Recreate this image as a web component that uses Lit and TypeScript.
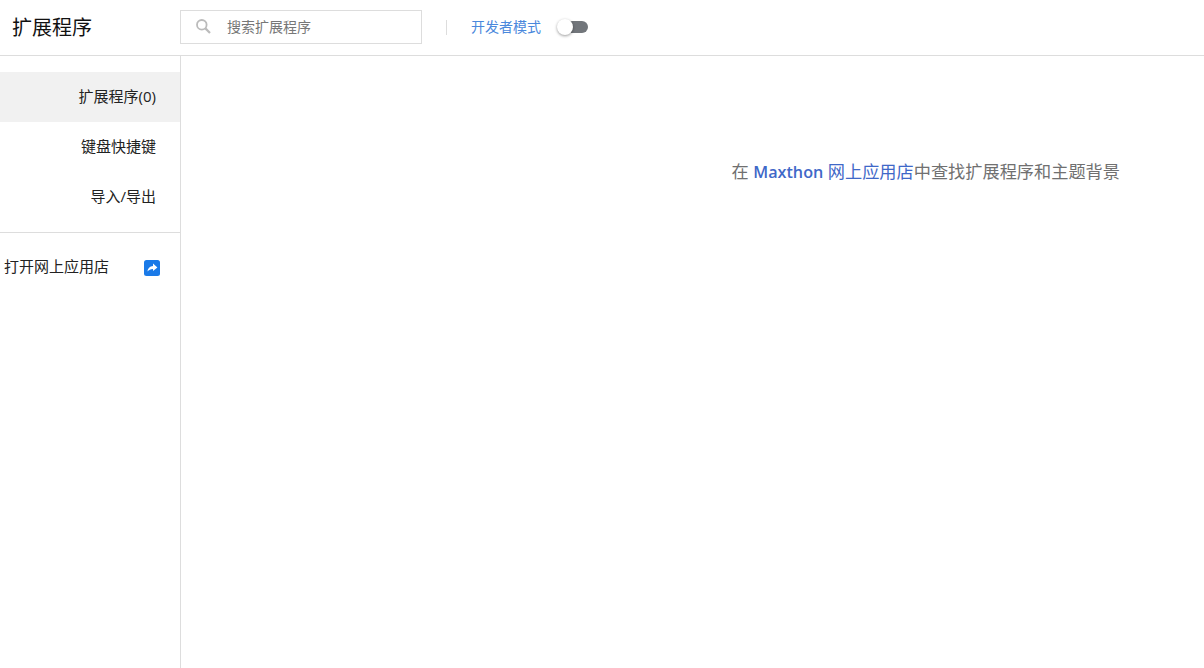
import { LitElement, html, css } from "lit";
import { customElement } from "lit/decorators.js";

@customElement("app-root")
export class AppRoot extends LitElement {
  static styles = css`
    :host {
      display: flex;
      flex-direction: column;
      width: 1204px;
      height: 668px;
      overflow: hidden;
      background: #fff;
      font-family: "Open Sans", "Noto Sans CJK SC", sans-serif;
      color: #222;
    }
    .top {
      height: 55px;
      flex: none;
      display: flex;
      align-items: center;
      border-bottom: 1px solid #ddd;
    }
    .title {
      width: 180px;
      padding-left: 12px;
      box-sizing: border-box;
      font-size: 20px;
      color: #111;
      line-height: 55px;
    }
    .search {
      width: 242px;
      height: 34px;
      box-sizing: border-box;
      border: 1px solid #ddd;
      display: flex;
      align-items: center;
      padding-left: 14px;
      gap: 15px;
      font-size: 14px;
      color: #777;
      margin-bottom: 1px;
    }
    .search span {
      margin-bottom: 2px;
    }
    .search svg {
      margin-bottom: 1px;
    }
    .sep {
      width: 1px;
      height: 15px;
      background: #ddd;
      margin-left: 24px;
    }
    .dev {
      margin: 0 0 3px 24px;
      font-size: 14px;
      color: #4a88dc;
    }
    .toggle {
      margin-left: 15px;
      position: relative;
      width: 32px;
      height: 14px;
      flex: none;
      margin-bottom: 1px;
    }
    .track {
      width: 27px;
      height: 12px;
      margin: 1px 0 0 5px;
      border-radius: 6px;
      background: #72767b;
    }
    .knob {
      position: absolute;
      left: 1px;
      top: -1px;
      width: 16px;
      height: 16px;
      border-radius: 50%;
      background: #fff;
      box-shadow: 0 1px 3px rgba(0, 0, 0, 0.4);
    }
    .body {
      flex: 1;
      display: flex;
      min-height: 0;
    }
    .side {
      width: 181px;
      flex: none;
      box-sizing: border-box;
      border-right: 1px solid #ddd;
      padding-top: 16px;
      font-size: 15px;
    }
    .item {
      height: 50px;
      line-height: 49px;
      text-align: right;
      padding-right: 24px;
    }
    .item.on {
      background: #f1f1f1;
    }
    .rule {
      height: 1px;
      background: #ddd;
      margin-top: 10px;
    }
    .store {
      display: flex;
      align-items: center;
      justify-content: space-between;
      height: 70px;
      padding: 0 20px 0 4px;
    }
    .store span {
      margin-bottom: 5px;
    }
    .store svg {
      display: block;
    }
    .main {
      flex: 1;
      display: flex;
      justify-content: flex-end;
      padding: 104px 84px 0 0;
      font-size: 17.2px;
      line-height: 24px;
      color: #707070;
    }
    .main a {
      color: #3f68c8;
      text-decoration: none;
    }
    .main b {
      font-weight: 600;
      font-size: 16.2px;
    }
  `;

  render() {
    return html`
      <div class="top">
        <div class="title">扩展程序</div>
        <div class="search">
          <svg width="17" height="17" viewBox="0 0 17 17" fill="none" stroke="#bbb" stroke-width="1.8">
            <circle cx="6.8" cy="6.8" r="4.8"></circle>
            <path d="M10.4 10.4L15 15" stroke-width="2.2"></path>
          </svg>
          <span>搜索扩展程序</span>
        </div>
        <div class="sep"></div>
        <div class="dev">开发者模式</div>
        <div class="toggle"><div class="track"></div><div class="knob"></div></div>
      </div>
      <div class="body">
        <nav class="side">
          <div class="item on">扩展程序(0)</div>
          <div class="item">键盘快捷键</div>
          <div class="item">导入/导出</div>
          <div class="rule"></div>
          <div class="store">
            <span>打开网上应用店</span>
            <svg width="16" height="16" viewBox="0 0 16 16">
              <rect width="16" height="16" rx="2.5" fill="#1a7ae8"></rect>
              <path d="M9 3.6L13.4 7.4L9 11V8.9C6.6 8.9 4.9 9.7 3.4 11.6C3.8 8.5 5.6 6.2 9 5.9Z" fill="#fff"></path>
            </svg>
          </div>
        </nav>
        <main class="main">
          <div>在 <a href="#"><b>Maxthon</b> 网上应用店</a>中查找扩展程序和主题背景</div>
        </main>
      </div>
    `;
  }
}
